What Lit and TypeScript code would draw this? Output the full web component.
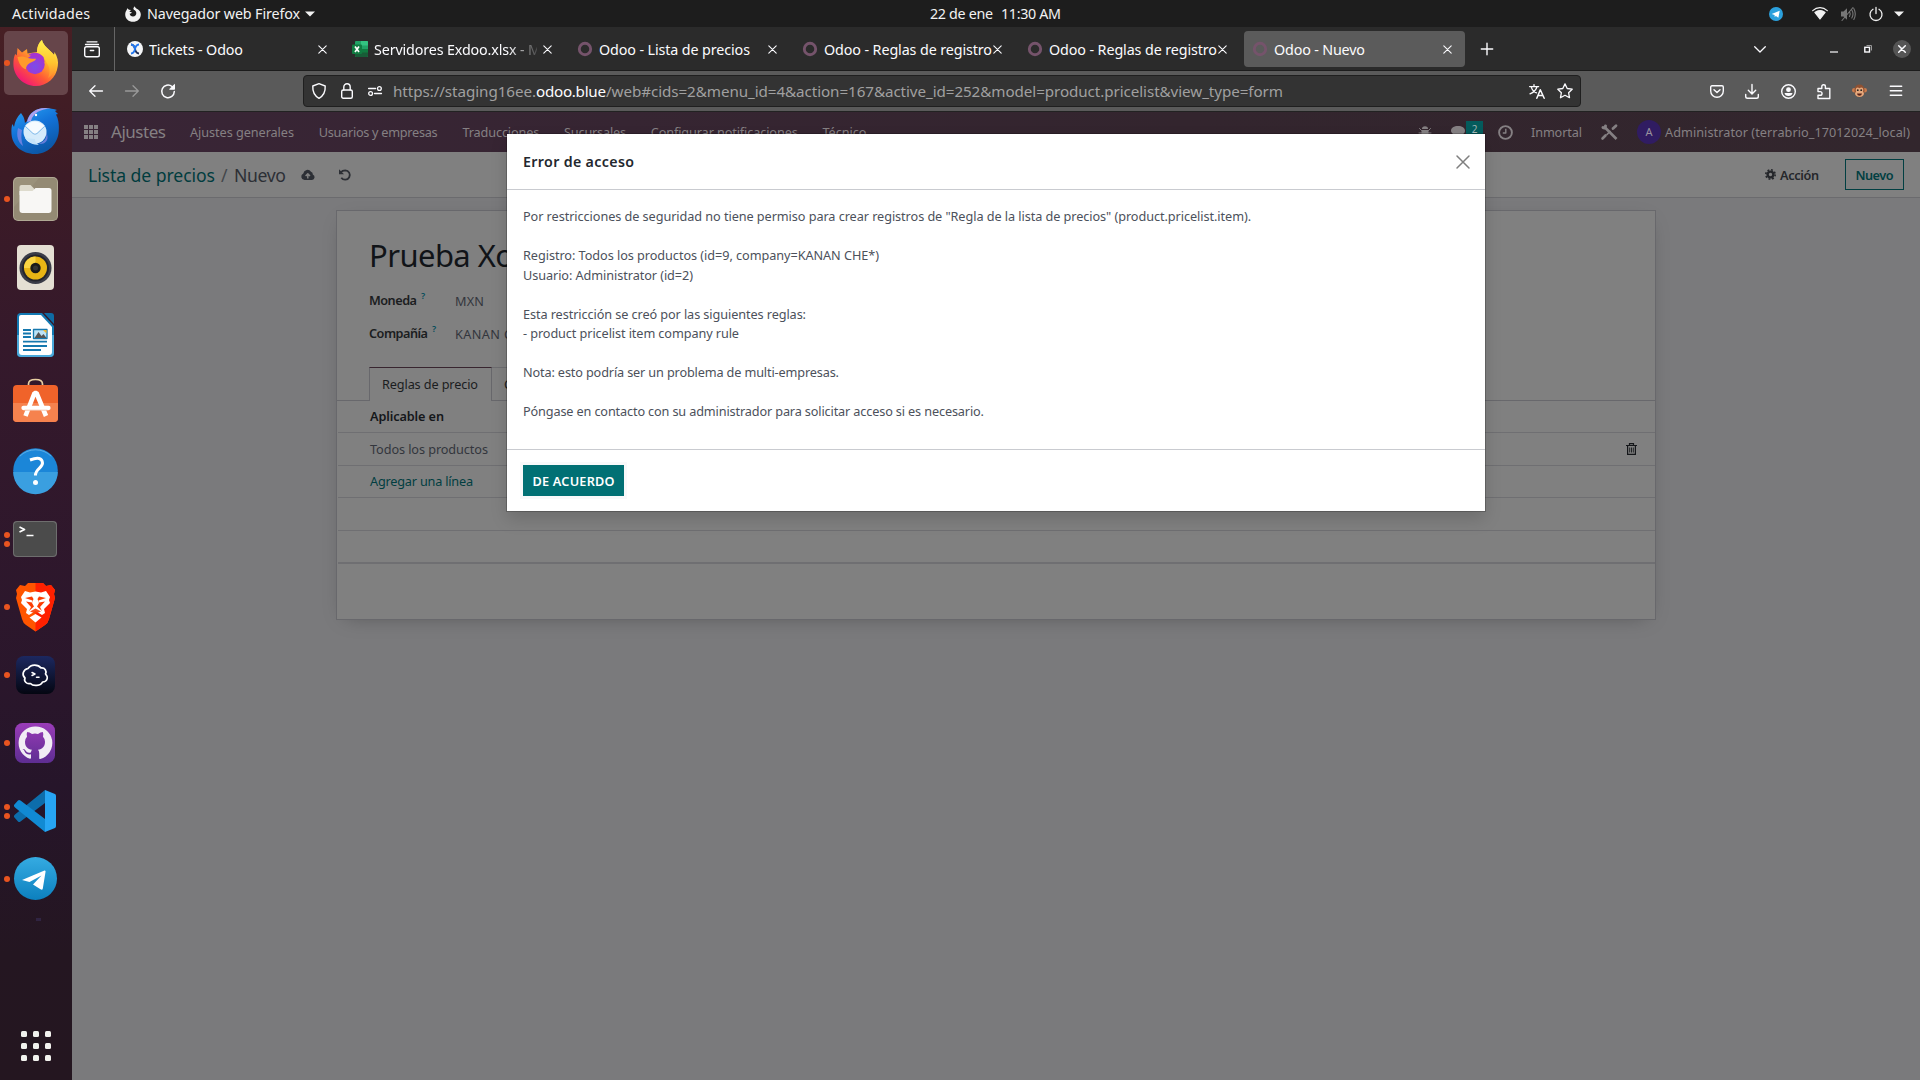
import { LitElement, html, svg, css, nothing } from "lit";
import { customElement } from "lit/decorators.js";

const FAMILY = '"Noto Sans", "Open Sans", sans-serif';

/* Text styles shared by the measuring helper and the CSS classes below. */
const FONTS: Record<string, [number, number]> = {
  bar: [14.3, 400],
  url: [15.2, 400],
  brand: [17, 400],
  nav: [12.7, 400],
  crumb: [17.6, 400],
  strong: [12.7, 600],
  title: [31, 400],
  head: [14.2, 600],
  body: [12.7, 400],
};

const ctx = document.createElement("canvas").getContext("2d")!;

/* A run of text tracked so that it fills the given width. */
const fit = (kind: string, text: string, width: number, cls = "") => {
  const [size, weight] = FONTS[kind];
  ctx.font = `${weight} ${size}px ${FAMILY}`;
  const n = Math.max(1, text.length - 1);
  const track = text.length > 1 ? (width - ctx.measureText(text).width) / n : 0;
  return html`<span class="t ${kind} ${cls}" style="width:${width}px;letter-spacing:${track.toFixed(3)}px">${text}</span>`;
};

const icon = (w: number, h: number, body: unknown, cls = "") =>
  html`<svg class="ic ${cls}" width=${w} height=${h} viewBox="0 0 ${w} ${h}" fill="none" stroke="currentColor" stroke-width="1.5" stroke-linecap="round" stroke-linejoin="round">${body}</svg>`;

const closeX = icon(9, 9, svg`<path stroke-width="1.1" d="M.8.8l7.4 7.4M8.2.8L.8 8.2"/>`, "tab-x");
const ring = icon(16, 16, svg`<circle cx="8" cy="8" r="5.7" stroke="#75536b" stroke-width="2.9"/>`);

const shared = css`
  * { box-sizing: border-box; }
  .t { display: inline-block; white-space: pre; flex: none; }
  .bar { font-size: 14.3px; }
  .url { font-size: 15.2px; }
  .brand { font-size: 17px; }
  .nav, .body { font-size: 12.7px; }
  .crumb { font-size: 17.6px; }
  .strong { font-size: 12.7px; font-weight: 600; }
  .title { font-size: 31px; }
  .head { font-size: 14.2px; font-weight: 600; }
  .ic { display: block; flex: none; overflow: visible; }
`;

@customElement("system-bar")
class SystemBar extends LitElement {
  static styles = [shared, css`
    :host { display: grid; grid-template-columns: 930px 131px 1fr; align-items: center; height: 27px; background: #1d1d1d; color: #f2f2f2; line-height: 26px; padding-right: 16px; }
    .left, .right, .mid { display: flex; align-items: center; height: 27px; }
    .left { padding-left: 12px; }
    .app { display: flex; align-items: center; margin-left: 35px; gap: 6px; }
    .mid { gap: 8px; }
    .right { justify-content: flex-end; }
    .wifi { margin-left: 29px; }
    .snd { margin-left: 12px; color: #777; }
    .pw { margin-left: 13px; }
    .down { margin-left: 11px; }
    .caret { margin-left: -1px; }
  `];
  render() {
    return html`
      <div class="left">
        ${fit("bar", "Actividades", 78)}
        <div class="app">
          ${icon(16, 16, svg`<path fill="currentColor" stroke="none" d="M2.2 2.2L4 3.8l2 .2-1.7 1.7 2.6.6-1 1.1-1.2.2c0 1.8 1.6 2.9 3.3 2.9 2 0 3.3-1.500 3.300-3.200 0-2-1.200-2.900-2.500-3.500L8.300 2.200 9.700.2c.4 1.700 1.600 2.100 3 3.100 2 1.300 3.100 3.200 3.100 5.100 0 4.200-3.500 7.400-7.800 7.400S.200 12.600.200 8.400c0-2.100.8-3.600 1.500-4.400z"/>`)}
          ${fit("bar", "Navegador web Firefox", 153)}
          ${icon(10, 6, svg`<path d="M0 .5h10L5 5.500z" fill="currentColor" stroke="none"/>`, "caret")}
        </div>
      </div>
      <div class="mid">${fit("bar", "22 de ene", 63)}${fit("bar", "11:30 AM", 60)}</div>
      <div class="right">
        ${icon(14, 14, svg`<g stroke="none"><circle cx="7" cy="7" r="7" fill="#2ba0dc"/><path fill="#fff" d="M2.700 6.900l8-3.200-1.300 7-2.500-1.800-1.200 1-.1-2z"/></g>`)}
        ${icon(16, 13, svg`<g stroke-width="1.200"><path d="M.7 3.600C5-.300 11-.300 15.300 3.600"/><path fill="currentColor" d="M2.900 5.400c3-2.500 7.200-2.500 10.200 0L8 12z"/></g>`, "wifi")}
        ${icon(16, 14, svg`<path fill="currentColor" stroke="none" d="M1 4.500h2.500L7 1.200v11.500L3.500 9.500H1z"/><path d="M9.500 4.500q1.500 2.500 0 5M11.800 3q2.400 4 0 8M13.800 1.500q3 5.500 0 11M2 13.500L13 .5" stroke-width="1.100"/>`, "snd")}
        ${icon(14, 14, svg`<path stroke-width="1.300" d="M4 2.300a6 6 0 1 0 6 0M7 .4v6.200"/>`, "pw")}
        ${icon(10, 6, svg`<path d="M0 .5h10L5 5.500z" fill="currentColor" stroke="none"/>`, "down")}
      </div>`;
  }
}

const firefox = svg`<defs>
    <linearGradient id="fx" x1=".85" y1=".1" x2=".2" y2=".95"><stop offset="0" stop-color="#fff14f"/><stop offset=".35" stop-color="#ffb02a"/><stop offset=".65" stop-color="#ff5a35"/><stop offset="1" stop-color="#f0127c"/></linearGradient>
    <radialGradient id="gl" cx=".5" cy=".6" r=".6"><stop offset="0" stop-color="#7a4dea"/><stop offset="1" stop-color="#a533d2"/></radialGradient>
    <linearGradient id="tl" x1="0" y1="0" x2="0" y2="1"><stop offset="0" stop-color="#fff04e"/><stop offset=".6" stop-color="#ffc52f"/><stop offset="1" stop-color="#ff8a30"/></linearGradient>
  </defs><g stroke="none">
  <path fill="url(#fx)" d="M4.500 8l4.500 4.500 5-3.500.5 4.500L24 12c0-4 1-8.500 5-12 1 6 8 9.500 12 15l.5-3c3.200 5 4 9.500 3.300 14C43.400 38 34 46 22.800 46 10.400 46 .4 36 .4 24c0-4.500.6-7.500 1.800-10l1.600 1.500z"/>
  <path fill="url(#tl)" d="M24 13c0-5 1.500-10 5-13 1 6 8 9.500 12 15 4 8 2 18-6 23 2.500-6 2-11-1.500-15.500C31.500 17 28 14.500 24 13z"/>
  <circle cx="22" cy="24.500" r="9.700" fill="url(#gl)"/>
  <path fill="#a533d2" d="M15.500 15c4-3.500 11-3 15 2l1.200 5c-4-4-9.500-5-16.200-7z"/>
  <path fill="#ff9a2c" d="M4.500 17c3-1 7.500-.5 10.500 1 2.500 1.200 5.500.5 8 .8-.4 2.200-4 3.200-6.500 4.500-2.500 1.500-3.500 3.500-3.500 6C8.500 28 5.500 23 4.500 17z"/>
</g>`;

const thunderbird = svg`<defs><linearGradient id="tb" x1="0" y1="0" x2=".5" y2="1"><stop offset="0" stop-color="#2aa4f4"/><stop offset=".5" stop-color="#1373d9"/><stop offset="1" stop-color="#0c58a8"/></linearGradient></defs><g stroke="none">
  <path fill="url(#tb)" d="M16 13C18 5 25 0 34 0c5 0 9 1 12 2l-2 1 3 3-2 .5 1.500 3.500C48 15 48 19 47.800 23 47 36 37 46 24 46 11 46 1 37 .5 26c-.3-4 0-8 1-10l1.500 3c1-6 3-10 7-14 3 4 3.500 6 4 10z"/>
  <path fill="#a9a0ef" d="M16 14C18 5 25 0 34 0c2 0 4 .2 6 .6C30 1 22 5 20 13z"/>
  <path fill="#8c8ae8" d="M7 20c-2 8 0 14 5 18-2-6-2-11-1-16zM35 24c2 6-3 11-8 12 8 1 12-5 8-12z" opacity=".7"/>
  <circle cx="24" cy="24" r="11.500" fill="#d5ebfb"/><path fill="#f6fbff" d="M14.500 18q9-9 19 0l-9.500 9z"/><path d="M14.500 18.500l7.500 7q2 1.600 4 0l7.500-7" stroke="#7fb9ea" stroke-width="1" fill="none"/>
  <path fill="#c6e4fa" d="M14 30c3 5 8 6.500 14 7-4-3-4-4-4-6z"/><circle cx="25" cy="7" r="1.200" fill="#fff"/>
</g>`;

const files = svg`<g stroke="none"><rect width="45" height="44" rx="5" fill="#b0a994"/><rect x="1" y="1" width="43" height="42" rx="4.500" fill="#9a917a"/><path d="M1 30L26 1h14q4 0 4 4v38H5q-4 0-4-4z" fill="#8d846e" opacity=".5"/>
  <path fill="#dedbcd" d="M6.500 10q0-2 2-2h9l4 4v6h-15z"/><path fill="#f8f7f5" d="M6.500 14h13l3-3H36q2.500 0 2.500 2.500V33q0 3-3 3h-26q-3 0-3-3z"/></g>`;

const rhythm = svg`<g stroke="none"><rect width="37" height="45" rx="4" fill="#e4dfd3"/><circle cx="18.500" cy="23" r="16" fill="#3b3d48"/><circle cx="18.500" cy="23" r="13.500" fill="#24252c"/><circle cx="18.500" cy="23" r="11.500" fill="#e8b515"/><path fill="#f9d444" d="M7 23a11.500 11.500 0 0 1 11.500-11.500V23z"/><circle cx="18.500" cy="23" r="5.200" fill="#1a1a1a"/><circle cx="18.500" cy="23" r="2.500" fill="#333"/></g>`;

const writer = svg`<g stroke="none"><path fill="#1279b3" d="M4 0h21l12 13v27q0 4-4 4H4q-4 0-4-4V4q0-4 4-4z"/><path fill="#4aa9da" d="M0 22h37v18q0 4-4 4H4q-4 0-4-4z"/><path fill="#fff" d="M4 2h20l11 12v25q0 3-3 3H5q-3 0-3-3V4q0-2 2-2z"/><path fill="#0f6ba4" d="M27 0h7q3 0 3 3v8z"/>
  <path d="M6 17h8M6 20.500h8M6 24h8M6 28.700h24M6 33h24M6 37h18" stroke="#1678ae" stroke-width="1.800" stroke-linecap="butt"/><rect x="16.500" y="16.500" width="13.500" height="9" fill="#bde3f7" stroke="#1678ae" stroke-width="1.300"/><path fill="#555" d="M17.500 25l4-6 3 4 2-2 3 4z"/><path fill="#f1b82c" d="M26 17h3.500v3.500z"/></g>`;

const software = svg`<path d="M15.500 8V5q0-4.500 7-4.500t7 4.500v3" stroke="#e8cfa2" stroke-width="1.700"/><g stroke="none"><rect y="6" width="45" height="37" rx="4" fill="#f0632a"/><path fill="#f6824e" d="M0 24h45v15q0 4-4 4H4q-4 0-4-4z"/></g>
  <g stroke="#fff" stroke-linecap="butt"><path d="M12.500 37L21.500 14h2l9.500 23" stroke-width="4.600" stroke-linejoin="bevel"/><path d="M10.500 29h25" stroke-width="4.300" stroke-linecap="round"/></g><path d="M12 31.200h22" stroke="#f3b799" stroke-width=".8"/>`;

const help = svg`<g stroke="none"><circle cx="22.500" cy="22.500" r="22.300" fill="#1b86d8"/><path fill="#3a9fe0" d="M.2 24h44.600a22.300 22.300 0 0 1-44.600 0z"/><path fill="none" stroke="#6db7ea" d="M7 8a22 22 0 0 1 31 0" stroke-width=".8"/><circle cx="22.500" cy="34.500" r="2.500" fill="#fff"/></g><path stroke="#fff" stroke-width="3" stroke-linecap="butt" d="M17 12q12-4.500 12.500 3c0 5-7.500 6-7 12.500"/>`;

const terminal = svg`<g stroke="none"><rect width="44" height="36" rx="4" fill="#6e6e6e"/><rect x="1" y="1" width="42" height="34" rx="3.500" fill="#4b4b4b"/></g><path stroke="#fff" stroke-width="1.700" d="M6.500 6l5 2.500-5 2.500M13.500 14.500h7" stroke-linecap="butt"/>`;

const brave = svg`<g stroke="none"><path fill="#ff5500" d="M10 3l3-3h15l3 3 5-1 4 5-1 4 1 4-6 21q-1 4-4 6l-9.500 6.500L11 42q-3-2-4-6L1 15l1-4-1-4 4-5z"/><path fill="#ff2000" d="M20.500 0H28l3 3 5-1 4 5-1 4 1 4-6 21q-1 4-4 6l-9.500 6.500z"/>
  <path fill="#fff" d="M6 14l4-6 5 1.500 5.500-1 5.500 1 5-1.500 4 6-1 3 1 3-6 6 1 4-3 2-6.500-4-6.500 4-3-2 1-4-6-6 1-3z"/><path fill="#fff" d="M20.500 31l6 3.500-6 5-6-5z"/>
  <path fill="#fb3d05" d="M10 15l7-1.500 1.500 2.500-1.500 4 2 3.500-5 4.500 2-4-5-5.500 6 1 .5-2zM31 15l-7-1.500-1.500 2.500 1.500 4-2 3.500 5 4.500-2-4 5-5.500-6 1-.5-2z"/><path fill="#fb3d05" d="M15 28.500l5.500-3 5.500 3-5.500 2z" opacity=".9"/></g>`;

const termius = svg`<defs><linearGradient id="tm" x1="0" y1="0" x2="0" y2="1"><stop offset="0" stop-color="#1c2860"/><stop offset="1" stop-color="#040611"/></linearGradient></defs><rect width="39" height="38" rx="8" fill="url(#tm)" stroke="none"/><path stroke="#fff" stroke-width="1.700" d="M12 12.500c3-4.500 10-4.500 13-.5 4-.5 6 3 4.500 6 3 3 2 8-3 8-1.500 4-9.500 4.500-12 1.500-4 1-7-2.500-5.500-5.500-3.500-3-2-8.500 3-9.500z"/><path stroke="#fff" stroke-width="1.500" d="M16 16.500l3 1.500-3 1.500M20.500 21.300h2.500"/>`;

const github = svg`<defs><linearGradient id="gh" x1="0" y1="0" x2="0" y2="1"><stop offset="0" stop-color="#9a3cb8"/><stop offset="1" stop-color="#5e2d92"/></linearGradient></defs><g stroke="none"><rect width="40" height="40" rx="7.500" fill="url(#gh)"/><path fill="#f1edf5" d="M20 3.500a16.500 16.500 0 0 0-5 32.200q1 .1 1-.9v-3.500c-5 1-6-2-6.500-3.200-.5-1-1.200-1.600-2-2.100 2.500-.5 3.200 2 4 2.700 1.500 1.500 3.500 1.200 4.500.5q.2-1.700 1-2.500c-4.500-.5-7-3.200-7-8q0-3 2-5-.8-2.500.2-4.700 2.300 0 4.800 2 3-.8 6 0 2.500-2 4.800-2 1 2.200.2 4.700 2 2 2 5c0 4.800-2.700 7.500-7 8q1.200 1.200 1.200 3.500v5q0 1 1 .7A16.500 16.500 0 0 0 20 3.500z"/></g>`;

const vscode = svg`<g stroke="none"><path fill="#0d6dab" d="M0 27l4 4.500q1 1 2.500 0L31 13V0L1 24.500q-1.500 1.200-1 2.500z"/><path fill="#118ad3" d="M0 15l4-4.500q1-1 2.500 0L31 29v13L1 17.500Q-.5 16.300 0 15z"/><path fill="#27a5f3" d="M31 0l10 4q1 .6 1 2v30q0 1.400-1 2l-10 4z"/></g>`;

const telegram = svg`<defs><linearGradient id="tg" x1="0" y1="0" x2="0" y2="1"><stop offset="0" stop-color="#35abe2"/><stop offset="1" stop-color="#0c80be"/></linearGradient></defs><g stroke="none"><circle cx="21.500" cy="21.500" r="21.500" fill="url(#tg)"/><path fill="#fff" d="M8 23L30.500 13.500q1.500-.3 1 1.500l-2.700 16.500q-.4 2-2.300.8L19 27.500l8.500-9L15.500 25z"/></g>`;

const APPS: { art: unknown; w: number; h: number; dots: number; active?: boolean }[] = [
  { art: firefox, w: 45, h: 46, dots: 1, active: true },
  { art: thunderbird, w: 48, h: 46, dots: 0 },
  { art: files, w: 45, h: 44, dots: 1 },
  { art: rhythm, w: 37, h: 45, dots: 0 },
  { art: writer, w: 37, h: 44, dots: 0 },
  { art: software, w: 45, h: 48, dots: 0 },
  { art: help, w: 45, h: 46, dots: 0 },
  { art: terminal, w: 44, h: 36, dots: 2 },
  { art: brave, w: 41, h: 48, dots: 1 },
  { art: termius, w: 39, h: 38, dots: 1 },
  { art: github, w: 40, h: 40, dots: 1 },
  { art: vscode, w: 42, h: 42, dots: 2 },
  { art: telegram, w: 43, h: 44, dots: 1 },
];

@customElement("app-dock")
class AppDock extends LitElement {
  static styles = [shared, css`
    :host { display: flex; flex-direction: column; width: 72px; padding-top: 2px; background: linear-gradient(#471f24 0, #3c1b26 14%, #35192b 30%, #2d172c 55%, #26152a 72%, #241621 88%, #241620 100%); }
    .slot { display: grid; grid-template-columns: 6px 1fr; align-items: center; height: 68px; padding: 2px 4px; }
    .slot > .dots { display: flex; flex-direction: column; gap: 3px; }
    .dot { width: 6px; height: 6px; border-radius: 50%; background: #e95420; }
    .slot .ic { justify-self: center; margin-left: -7.500px; }
    .active { background: #66454a; border-radius: 5px; height: 64px; margin: 2px 4px; padding: 2px 0; }
    .active .dots { margin-left: 0; }
    .mark { width: 5px; height: 3px; background: #302442; margin: 5px 0 0 36px; }
    .grid { display: grid; grid-template-columns: repeat(3, 6px); gap: 6px; margin: auto 0 19px 21px; }
    .grid i { width: 6px; height: 6px; border-radius: 1.500px; background: #f2f2ee; }
  `];
  render() {
    return html`
      ${APPS.map((a) => html`<div class="slot ${a.active ? "active" : ""}">
        <div class="dots">${Array.from({ length: a.dots }, () => html`<i class="dot"></i>`)}</div>
        ${icon(a.w, a.h, a.art)}
      </div>`)}
      <div class="mark"></div>
      <div class="grid">${Array.from({ length: 9 }, () => html`<i></i>`)}</div>`;
  }
}

@customElement("browser-chrome")
class BrowserChrome extends LitElement {
  static styles = [shared, css`
    :host { display: block; color: #fbfbfe; }
    .tabs { display: flex; align-items: center; height: 44px; background: #2b2b2b; border-bottom: 1px solid #1c1c1c; padding: 4px 9px 3px 0; line-height: 37px; }
    .list { display: flex; align-items: center; justify-content: center; width: 43px; height: 44px; border-right: 1px solid #666; margin-top: -1px; padding-right: 3px; }
    .tab { display: flex; align-items: center; width: 221px; height: 36px; margin-right: 4px; padding: 0 12px 0 8px; border-radius: 4px; }
    .first { margin-left: 4px; }
    .lbl { flex: 1; overflow: hidden; margin-left: 6px; display: flex; height: 37px; margin-top: 1px; }
    .cut .lbl { -webkit-mask-image: linear-gradient(90deg, #000 82%, rgba(0, 0, 0, .15) 100%); mask-image: linear-gradient(90deg, #000 82%, rgba(0, 0, 0, .15) 100%); margin-right: 6px; }
    .tab-x { margin-left: -6px; margin-right: 1px; }
    .cut .tab-x { margin-left: 0; }
    .on { background: #5b5b5b; }
    .plus { margin-left: 12px; }
    .chev { margin-left: auto; }
    .min { margin-left: 64px; }
    .max { margin-left: 26px; }
    .cls { margin-left: 21px; }
    .tools { display: flex; align-items: center; height: 41px; background: #5a5a5a; border-bottom: 1px solid #222; padding: 0 18px 0 17px; }
    .fwd { margin-left: 22px; color: #999; }
    .rel { margin-left: 22px; }
    .field { display: flex; align-items: center; width: 1278px; height: 32px; margin-left: 128px; background: #333; border: 1px solid #1f1f1f; border-radius: 4px; padding: 0 7px 0 8px; line-height: 30px; color: #a0a0a0; }
    .lock { margin-left: 15px; }
    .perm { margin: 0 11px 0 15px; }
    .host { color: #fbfbfe; }
    .tr { margin-left: auto; }
    .field > .ic { color: #fbfbfe; }
    .star { margin-left: 12px; }
    .p1 { margin-left: auto; }
    .p2 { margin-left: 21px; } .p3 { margin-left: 22px; } .p4 { margin-left: 21px; } .p5 { margin-left: 21px; } .p6 { margin-left: 23px; }
  `];
  render() {
    const excel = icon(16, 16, svg`<g stroke="none"><rect x="3" width="13" height="16" rx="1" fill="#21a366"/><path fill="#33c481" d="M9 0h6q1 0 1 1v3.500H9z"/><path fill="#107c41" d="M3 8h13v4H3z"/><path fill="#185c37" d="M3 11.500h13V15q0 1-1 1H4q-1 0-1-1z"/><rect y="3.500" width="10" height="9.500" rx="1" fill="#107c41"/></g><path stroke="#fff" stroke-width="1.700" stroke-linecap="butt" d="M3 5.500l4 5.500M7 5.500L3 11"/>`);
    const exdoo = icon(16, 16, svg`<circle cx="8" cy="8" r="8" fill="#f4f5f7" stroke="none"/><path stroke="#1e2d55" stroke-width="1.800" stroke-linecap="butt" d="M4 3.500q3.200.3 4 4.500.8 4.200 4 4.500"/><path stroke="#2176ee" stroke-width="1.800" stroke-linecap="butt" d="M12 3.500Q8.800 3.800 8 8q-.8 4.200-4 4.500"/><path stroke="#2176ee" stroke-width="1.800" stroke-linecap="butt" d="M4 3.500q3.200.3 4 4.500"/>`);
    const tabs: [unknown, string, number, string][] = [
      [exdoo, "Tickets - Odoo", 94, "first"],
      [excel, "Servidores Exdoo.xlsx - M", 167, "cut"],
      [ring, "Odoo - Lista de precios", 151, ""],
      [ring, "Odoo - Reglas de registro", 168, ""],
      [ring, "Odoo - Reglas de registro", 168, ""],
      [ring, "Odoo - Nuevo", 91, "on"],
    ];
    return html`
      <div class="tabs">
        <div class="list">${icon(16, 16, svg`<path stroke-width="1.300" d="M3 .8h10M1.500 3.500h13"/><rect x=".7" y="5.700" width="14.600" height="10" rx="1.800" stroke-width="1.400"/><path d="M6.300 9.500h3.400" stroke-width="1.300"/>`)}</div>
        ${tabs.map(([ic, label, w, cls]) => html`<div class="tab ${cls}">${ic}<div class="lbl">${fit("bar", label, w)}</div>${closeX}</div>`)}
        ${icon(12, 12, svg`<path stroke-width="1.400" d="M6 .3v11.400M.3 6h11.400"/>`, "plus")}
        ${icon(12, 7, svg`<path stroke-width="1.300" d="M.7.700L6 6 11.300.700"/>`, "chev")}
        ${icon(8, 7, svg`<path stroke-width="1.200" d="M0 6h8" stroke-linecap="butt"/>`, "min")}
        ${icon(8, 8, svg`<g stroke-linejoin="miter" stroke-linecap="butt"><rect x=".8" y="2.300" width="4.700" height="4.700" stroke-width="1.400"/><path stroke="#999" stroke-width="1" d="M2.500.500h5v5"/></g>`, "max")}
        ${icon(18, 18, svg`<circle cx="9" cy="9" r="9" fill="#555" stroke="none"/><path stroke-width="1.500" d="M5.700 5.700l6.600 6.600M12.300 5.700l-6.600 6.600"/>`, "cls")}
      </div>
      <div class="tools">
        ${icon(14, 12, svg`<path stroke-width="1.300" d="M13.500 6H.8M6 .7L.7 6 6 11.300"/>`)}
        ${icon(14, 12, svg`<path stroke-width="1.300" d="M.5 6h12.700M8 .7L13.300 6 8 11.300"/>`, "fwd")}
        ${icon(14, 14, svg`<path stroke-width="1.500" d="M13.300 7.500A6.300 6.300 0 1 1 11 2.500L13 4.500"/><path fill="currentColor" stroke-width="1" d="M13.500.800v4.400H9z"/>`, "rel")}
        <div class="field">
          ${icon(14, 16, svg`<path stroke-width="1.400" d="M7 .7l6.200 2.300q.5 8.500-6.200 12.300Q.3 11.500.8 3z"/>`)}
          ${icon(12, 16, svg`<rect x=".7" y="7" width="10.600" height="8.300" rx="1.500" stroke-width="1.400"/><path stroke-width="1.400" d="M2.800 7V4a3.200 3.200 0 0 1 6.400 0v3"/>`, "lock")}
          ${icon(14, 10, svg`<g stroke-width="1.300"><path d="M.6 2.500h7M6.500 7.500h7"/><circle cx="11.400" cy="2.500" r="1.900"/><circle cx="2.600" cy="7.500" r="1.900"/></g>`, "perm")}
          ${fit("url", "https://staging16ee.", 143)}${fit("url", "odoo.blue", 70, "host")}${fit("url", "/web#cids=2&menu_id=4&action=167&active_id=252&model=product.pricelist&view_type=form", 677)}
          ${icon(16, 15, svg`<g stroke-width="1.300"><path d="M.6 2.600h9M5 .6v2M2.300 2.800q1 4.500 5.200 6M8 2.800q-1.500 5-7 7"/><path stroke-width="1.500" d="M7.800 14.300l3.500-8.600 3.900 8.600M9 11.600h5"/></g>`, "tr")}
          ${icon(16, 16, svg`<path stroke-width="1.300" d="M8 .9l2.200 4.600 5 .7-3.600 3.500.9 5L8 12.300l-4.500 2.400.9-5L.8 6.200l5-.7z"/>`, "star")}
        </div>
        ${icon(14, 13, svg`<path stroke-width="1.400" d="M2 .8h10q1.300 0 1.300 1.300V6A6.300 6.300 0 0 1 .7 6V2.100Q.7.800 2 .8zM4 4.700l3 2.800 3-2.800"/>`, "p1")}
        ${icon(14, 15, svg`<path stroke-width="1.400" d="M7 .5v9.300M3.300 6.300L7 10l3.700-3.700M.7 10.500v2q0 1.800 1.800 1.800h9q1.800 0 1.800-1.800v-2"/>`, "p2")}
        ${icon(15, 15, svg`<circle cx="7.500" cy="7.500" r="6.800" stroke-width="1.400"/><g fill="currentColor" stroke="none"><circle cx="7.500" cy="5.700" r="2.400"/><path d="M3.500 9h8q-.5 3-4 3t-4-3z"/></g>`, "p3")}
        ${icon(14, 15, svg`<path stroke-width="1.400" d="M1 7.500V4.500h3.800V2.500a1.800 1.800 0 0 1 3.600 0v2h4.400v10H1V11.300h2.200a1.800 1.800 0 0 0 0-3.700H1"/>`, "p4")}
        ${icon(15, 14, svg`<g stroke="none"><circle cx="2.200" cy="6.200" r="2.200" fill="#c97a4c"/><circle cx="12.800" cy="6.200" r="2.200" fill="#c97a4c"/><path fill="#8f5132" d="M7.500.500q4.700 0 5 5.500.2 7-5 7t-5-7Q2.800.5 7.500.5z"/><path fill="#e5a87c" d="M4.200 4q1.600-1 3.300.3Q9.200 3 10.800 4q1 1.800.2 3.500 1.600 1.500.6 3.500-1.300 2-4.100 2t-4.100-2q-1-2 .6-3.500-.8-1.700.2-3.500z"/><path fill="#5b2317" d="M5 9.500h5q-.3 2.300-2.500 2.300T5 9.500z"/><circle cx="5.800" cy="6.200" r=".9" fill="#222"/><circle cx="9.200" cy="6.200" r=".9" fill="#222"/></g>`, "p5")}
        ${icon(12, 12, svg`<path stroke-width="1.400" d="M.3 1.200h11.400M.3 5.700h11.400M.3 10.300h11.400"/>`, "p6")}
      </div>`;
  }
}

@customElement("odoo-page")
class OdooPage extends LitElement {
  static styles = [shared, css`
    :host { display: flex; flex-direction: column; flex: 1; background: #7a7a7c; }
    .top { display: flex; align-items: center; height: 40px; padding: 0 10px 0 12px; background: linear-gradient(90deg, #392536, #33252e 60%, #32262d); color: #858083; line-height: 40px; }
    .brand { margin-left: 13px; }
    .menu { display: flex; gap: 24.700px; margin-left: 24px; }
    .end { display: flex; align-items: center; margin-left: auto; }
    .chat { display: flex; align-items: center; margin-left: 20px; }
    .badge { display: flex; justify-content: center; width: 17px; height: 17px; line-height: 17px; background: #045b5c; color: #a5b5b5; margin: -6px 0 0 0; font-size: 10px; }
    .clk { margin: 0 18px 0 15px; }
    .wrench { margin: 0 19px 0 19px; }
    .ava { width: 24px; height: 24px; border-radius: 50%; background: #301c62; color: #99939f; text-align: center; line-height: 24px; font-size: 11px; margin-right: 4px; }
    .ctl { display: flex; align-items: center; height: 46px; background: #808080; border-bottom: 1px solid #6b6b6e; padding: 0 16px; color: #2c2f35; line-height: 44px; }
    .link { color: #003c3e; }
    .sep { margin: 0 6px 0 6px; color: #44474b; }
    .cloud { margin: 0 24px 0 15px; }
    .act { display: flex; align-items: center; gap: 4px; margin-left: auto; color: #25272b; }
    .new { display: flex; justify-content: center; width: 59px; height: 31px; border: 1px solid #013f42; color: #013f42; line-height: 30px; margin-left: 26px; }
    .sheet { width: 1320px; height: 410px; margin: 12px 0 0 264px; border: 1px solid #68686c; background: #808080; box-shadow: 0 5px 20px -10px rgba(0, 0, 0, .35); color: #1b1d20; display: flex; flex-direction: column; }
    .name { margin: 22px 0 0 32px; line-height: 44px; height: 44px; color: #111418; }
    .fields { display: grid; grid-template-columns: 86px 1fr; row-gap: 13px; margin: 13px 0 0 32px; line-height: 20px; }
    .fields > div { height: 20px; display: flex; }
    .q { color: #014b5a; font-size: 9px; line-height: 12px; margin-left: 4px; font-weight: 600; }
    .val { color: #33363d; padding-top: 1px; }
    .strip { display: flex; height: 34px; margin-top: auto; padding-left: 32px; line-height: 31px; background: linear-gradient(#68686c, #68686c) left bottom / 100% 1px no-repeat; }
    .pt { border: 1px solid #68686c; border-bottom: 0; width: 123px; padding-left: 12px; background: #808080; border-top-color: #38252f; height: 34px; }
    .pt2 { border-top: 1px solid #6d6d70; border-right: 1px solid #6d6d70; width: 100px; padding-left: 12px; height: 33px; }
    .row { display: flex; align-items: center; justify-content: space-between; border-bottom: 1px solid #6f6f72; padding: 0 18px 0 32px; margin-left: 1px; line-height: 30px; flex: none; }
    .r32 { height: 32px; } .r33 { height: 33px; }
    .up { padding-bottom: 2px; }
    .hd { color: #15171a; }
    .mut { color: #33363d; }
    .addl { color: #013e40; }
    .last { border-bottom: 2px solid #6f6f72; height: 33px; }
    .rest { height: 55px; flex: none; }
  `];
  render() {
    return html`
      <div class="top">
        ${icon(14, 14, svg`<g stroke="none" fill="currentColor">${[0, 5, 10].map((y) => [0, 5, 10].map((x) => svg`<rect x=${x} y=${y} width="4" height="4"/>`))}</g>`)}
        ${fit("brand", "Ajustes", 55)}
        <div class="menu">
          ${([["Ajustes generales", 104], ["Usuarios y empresas", 119], ["Traducciones", 77], ["Sucursales", 62], ["Configurar notificaciones", 147], ["Técnico", 44]] as [string, number][]).map(([s, w]) => fit("nav", s, w))}
        </div>
        <div class="end">
          ${icon(12, 12, svg`<g fill="currentColor" stroke="none"><path d="M3 3a3 2.800 0 0 1 6 0z"/><path d="M2.500 4h7v4q0 3-3.500 3.500Q2.500 11 2.500 8z"/></g><path stroke-width="1" d="M.5 2.500L2.500 4.500M11.500 2.500L9.500 4.500M0 7h12M1 11.500l2-2M11 11.500l-2-2"/>`)}
          <div class="chat">
            ${icon(15, 12, svg`<path fill="currentColor" stroke="none" d="M7 0c4 0 7 2 7 4.700S11 9.500 7 9.500L2 12l1-3.500C1 7.500 0 6.200 0 4.700 0 2 3 0 7 0z"/>`)}
            <span class="badge">2</span>
          </div>
          ${icon(15, 15, svg`<circle cx="7.500" cy="7.500" r="6.400" stroke-width="1.900"/><path stroke-width="1.400" d="M7.800 3.800v4.200H4.800" stroke-linecap="butt"/>`, "clk")}
          ${fit("nav", "Inmortal", 51)}
          ${icon(17, 16, svg`<path stroke-width="2.600" stroke-linecap="butt" d="M3.500 3L15.500 15"/><path stroke-width="3" d="M2 3.500Q4 5 4.500 2"/><path stroke-width="2.800" d="M12 4.500L15 1.800"/><path stroke-width="1.700" d="M6 10.500L9 7.500"/><path stroke-width="2.600" d="M4.500 11.500L1.500 14.500"/>`, "wrench")}
          <span class="ava">A</span>
          ${fit("nav", "Administrator (terrabrio_17012024_local)", 245)}
        </div>
      </div>
      <div class="ctl">
        ${fit("crumb", "Lista de precios", 127, "link")}
        ${fit("crumb", "/", 7, "sep")}
        ${fit("crumb", "Nuevo", 52)}
        ${icon(14, 11, svg`<path fill="currentColor" stroke="none" d="M3.500 11A3.400 3.400 0 0 1 2.300 4.500 4.200 4.200 0 0 1 10 2.800 2.600 2.600 0 0 1 11.800 5.600 2.800 2.800 0 0 1 11 11z"/><path stroke="#808080" stroke-width="1.500" stroke-linecap="butt" d="M6.800 9.500V5.500M4.600 7L6.800 4.700 9 7"/>`, "cloud")}
        ${icon(12, 12, svg`<path stroke-width="1.800" stroke-linecap="butt" d="M1.500 3.500Q3.500 1.300 6.300 1.300a4.700 4.700 0 1 1-4 7.500"/><path fill="currentColor" stroke="none" d="M0 .3v5h5z"/>`)}
        <div class="act">
          ${icon(11, 11, svg`<circle cx="5.500" cy="5.500" r="2.900" stroke-width="2.400"/><circle cx="5.500" cy="5.500" r="4.700" stroke-width="1.600" stroke-dasharray="1.850 1.840" stroke-linecap="butt"/>`)}
          ${fit("strong", "Acción", 39)}
        </div>
        <div class="new">${fit("strong", "Nuevo", 38)}</div>
      </div>
      <div class="sheet">
        <div class="name">${fit("title", "Prueba Xo", 145)}</div>
        <div class="fields">
          <div>${fit("strong", "Moneda", 48)}<span class="q">?</span></div><div class="val">${fit("body", "MXN", 29)}</div>
          <div>${fit("strong", "Compañía", 59)}<span class="q">?</span></div><div class="val">${fit("body", "KANAN C", 57)}</div>
        </div>
        <div class="strip"><div class="pt">${fit("body", "Reglas de precio", 96)}</div><div class="pt2">${fit("body", "C", 9)}</div></div>
        <div class="row r32 hd up">${fit("strong", "Aplicable en", 74)}</div>
        <div class="row r33 mut">${fit("body", "Todos los productos", 118)}
          ${icon(11, 12, svg`<g stroke="#15171a" stroke-width="1.200" stroke-linecap="butt" stroke-linejoin="miter"><path d="M0 2.500h11M3.500 2.500V.6h4v1.900M1.600 2.500v8.900h7.800V2.500"/><path stroke-width=".9" d="M3.700 4.500v5M5.500 4.500v5M7.300 4.500v5"/></g>`)}
        </div>
        <div class="row r32 addl up">${fit("body", "Agregar una línea", 103)}</div>
        <div class="row r33"></div>
        <div class="row last"></div>
        <div class="rest"></div>
      </div>`;
  }
}

@customElement("error-dialog")
class ErrorDialog extends LitElement {
  static styles = [shared, css`
    :host { position: absolute; left: 507px; top: 134px; width: 978px; height: 377px; background: #fff; box-shadow: 0 0 0 1px rgba(0, 0, 0, .2), 0 8px 16px rgba(0, 0, 0, .15); display: flex; flex-direction: column; color: #4c515b; }
    .hd { display: flex; align-items: center; justify-content: space-between; height: 56px; border-bottom: 1px solid #c9cbd0; padding: 0 15px 0 16px; color: #23272e; }
    .hd .t { line-height: 20px; padding-top: 1px; }
    .hd .ic { color: #7f7f7f; }
    .bd { flex: 1; padding: 17px 16px 15px; line-height: 19.500px; }
    .ln { height: 19.500px; display: flex; }
    .ft { height: 62px; border-top: 1px solid #c9cbd0; padding: 15px 16px; }
    .ok { display: flex; justify-content: center; width: 101px; height: 31px; background: #017074; box-shadow: 0 0 0 3px #f8f9fa; color: #fff; line-height: 33px; }
  `];
  render() {
    const lines: [string, number][] = [
      ['Por restricciones de seguridad no tiene permiso para crear registros de "Regla de la lista de precios" (product.pricelist.item).', 728],
      ["", 0],
      ["Registro: Todos los productos (id=9, company=KANAN CHE*)", 356],
      ["Usuario: Administrator (id=2)", 170],
      ["", 0],
      ["Esta restricción se creó por las siguientes reglas:", 283],
      ["- product pricelist item company rule", 216],
      ["", 0],
      ["Nota: esto podría ser un problema de multi-empresas.", 316],
      ["", 0],
      ["Póngase en contacto con su administrador para solicitar acceso si es necesario.", 461],
    ];
    return html`
      <div class="hd">${fit("head", "Error de acceso", 111)}${icon(14, 14, svg`<path stroke-width="1.500" d="M1 1l12 12M13 1L1 13"/>`)}</div>
      <div class="bd">${lines.map(([s, w]) => html`<div class="ln">${s ? fit("body", s, w) : nothing}</div>`)}</div>
      <div class="ft"><div class="ok">${fit("strong", "DE ACUERDO", 82)}</div></div>`;
  }
}

@customElement("app-root")
class AppRoot extends LitElement {
  static styles = css`
    :host { display: grid; grid-template: 27px 1053px / 72px 1848px; width: 1920px; height: 1080px; overflow: hidden; position: relative; font-family: "Noto Sans", "Open Sans", sans-serif; }
    system-bar { grid-column: 1 / 3; }
    .win { display: flex; flex-direction: column; }
  `;
  render() {
    return html`
      <system-bar></system-bar>
      <app-dock></app-dock>
      <div class="win"><browser-chrome></browser-chrome><odoo-page></odoo-page></div>
      <error-dialog></error-dialog>`;
  }
}
